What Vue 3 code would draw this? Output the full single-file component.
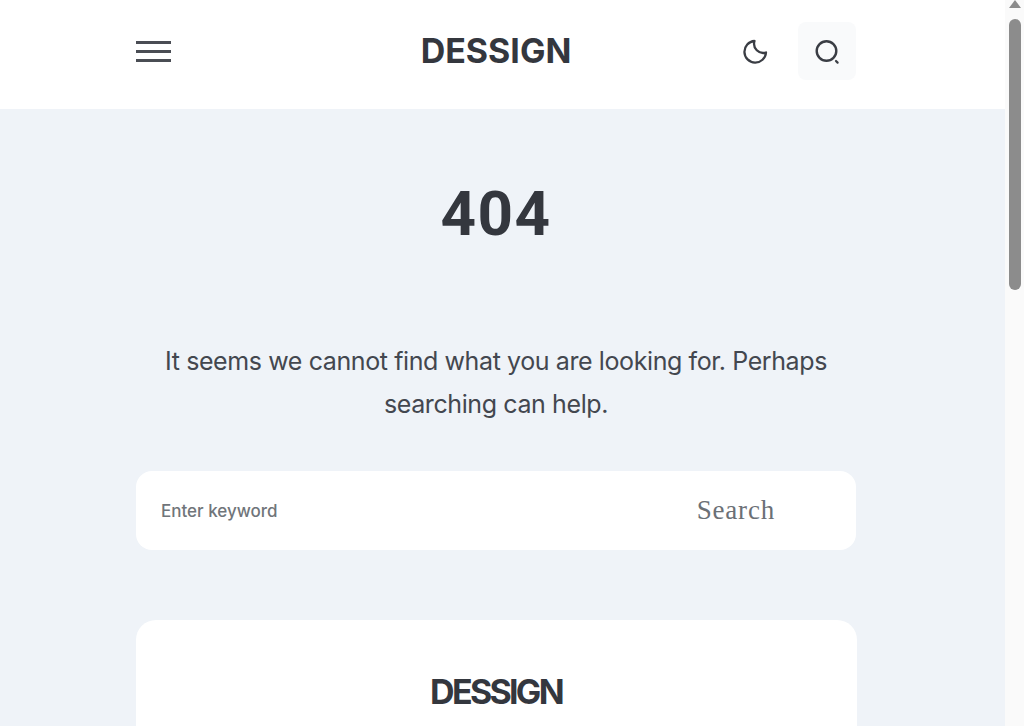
<script setup>
</script>

<template>
  <div class="page">
    <div class="main">
      <header class="header">
        <div class="inner head-row">
          <div class="burger"><i></i><i></i><i></i></div>
          <div class="logo">DESSIGN</div>
          <div class="tools">
            <svg class="moon" width="28" height="28" viewBox="0 0 28 28" fill="none" stroke="#3a3d44" stroke-width="2.3" stroke-linecap="round" stroke-linejoin="round"><path d="M13.5 4A10.8 10.8 0 1 0 25 15.5 9.2 9.2 0 0 1 13.5 4z"/></svg>
            <div class="search-btn">
              <svg width="28" height="28" viewBox="0 0 28 28" fill="none" stroke="#3a3d44" stroke-linecap="round"><circle cx="13.5" cy="14" r="9.8" stroke-width="2.4"/><path d="M23 24l1.6 1.6" stroke-width="2.2"/></svg>
            </div>
          </div>
        </div>
      </header>
      <section class="content">
        <h1 class="code">404</h1>
        <p class="msg">It seems we cannot find what you are looking for. Perhaps searching can help.</p>
        <form class="form" @submit.prevent>
          <span class="ph">Enter keyword</span>
          <span class="submit">Search</span>
        </form>
        <div class="card"><div class="card-logo">DESSIGN</div></div>
      </section>
    </div>
    <div class="scrollbar">
      <div class="arrow"></div>
      <div class="thumb"></div>
    </div>
  </div>
</template>

<style>
html, body { margin: 0; height: 726px; overflow: hidden; }
</style>

<style scoped>
.page { display: flex; width: 1024px; height: 726px; overflow: hidden; font-family: Inter, "Liberation Sans", sans-serif; color: #34373e; }
.main { width: 1005px; flex: none; background: #eff3f8; }
.header { background: #fff; height: 109px; }
.inner { width: 720px; margin-left: 136px; }
.head-row { height: 102px; display: grid; grid-template-columns: 1fr auto 1fr; align-items: center; }
.burger { width: 35px; display: flex; flex-direction: column; gap: 6px; }
.burger i { display: block; height: 3px; background: #4a4d54; }
.logo { font: 700 34px/1 Inter, sans-serif; }
.tools { display: flex; align-items: center; justify-content: flex-end; gap: 29px; }
.search-btn { width: 58px; height: 58px; border-radius: 8px; background: #f9fafb; display: flex; align-items: center; justify-content: center; }
.content { width: 720px; margin-left: 136px; display: flex; flex-direction: column; align-items: center; }
.code { font: 700 62px/60px Roboto, sans-serif; margin: 75px 0 0; letter-spacing: 1.5px; }
.msg { width: 680px; margin: 96px 0 0; text-align: center; font-size: 25px; line-height: 43px; font-weight: 400; letter-spacing: -0.4px; color: #43474f; }
.form { box-sizing: border-box; width: 720px; height: 79px; margin-top: 45px; background: #fff; border-radius: 16px; display: flex; align-items: center; justify-content: space-between; padding: 0 81px 0 25px; }
.ph { font-size: 17px; color: #70757a; font-weight: 500; }
.submit { font: 400 27px "Liberation Serif", serif; color: #6b7076; letter-spacing: 0.8px; }
.card { width: 721px; height: 300px; margin-top: 70px; background: #fff; border-radius: 20px; padding-top: 55px; text-align: center; }
.card-logo { font: 700 34px/1 Inter, sans-serif; letter-spacing: -2.7px; }
.scrollbar { width: 19px; flex: none; background: #fafafa; position: relative; }
.arrow { position: absolute; top: 0; left: 4px; width: 0; height: 0; border-left: 6px solid transparent; border-right: 6px solid transparent; border-bottom: 8px solid #8c8c8c; }
.thumb { position: absolute; top: 19px; left: 4px; width: 12px; height: 271px; border-radius: 6px; background: #8c8c8c; }
</style>
